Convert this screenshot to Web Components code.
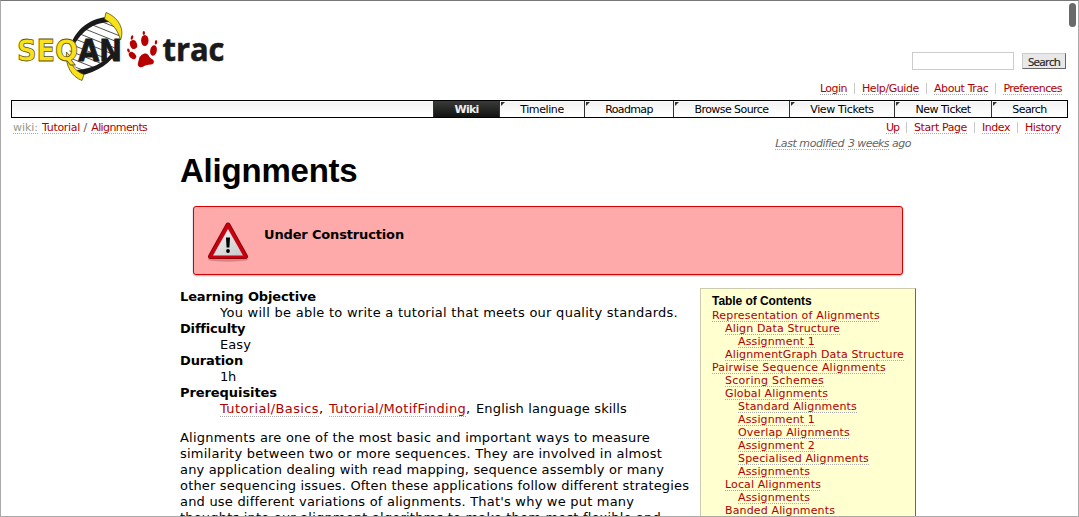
<!DOCTYPE html>
<html lang="en">
<head>
<meta charset="utf-8">
<title>Alignments – SeqAn trac</title>
<style>
html,body{margin:0;height:100%;overflow:hidden;background:#fff}
</style>
</head>
<body>
<trac-page></trac-page>

<template id="t-page">
<style>
:host{display:block;box-sizing:border-box;height:517px;overflow:hidden;border:1px solid #a9a9a9;border-top-color:#777;background:#fff;color:#000;font:13px/16px "DejaVu Sans",Verdana,sans-serif;position:relative}
header{display:flex;justify-content:space-between;height:78px;padding:0 12px 0 11px}
trac-search{margin-top:51px}
link-row{height:20px;--u:5px}
.ctx{display:flex;justify-content:space-between;height:18px;padding-left:12px;font-size:11px;color:#555;--u:5px}
.ctx link-row{padding-right:17px}
.crumbs{line-height:20px;white-space:pre;display:flex}
.crumbs span{margin:0 4px 0 3.5px}
.mod{display:flex;justify-content:flex-end;height:14px;line-height:14px;padding:1px 167px 0 0;font-size:11px;font-style:italic;color:#666;--u:5px}
main{width:736px;margin-left:179px}
h1{margin:0;height:55px;padding-top:2px;box-sizing:border-box;font:bold 33px/36px "Liberation Sans",Arial,sans-serif}
.cols{display:flex;justify-content:space-between;margin-top:14px}
.text{width:515px}
dl{margin:0}dt{font-weight:bold;height:16px}dd{margin:0 0 0 40px;height:16px;display:flex;white-space:pre;--u:7.15px}
p{margin:13px 0 0}
p fit-text{display:block}
.sb{position:absolute;right:2px;top:2px;width:7px;height:24px;border-radius:4px;background:#6a6a6a}
</style>
<header>
  <trac-logo></trac-logo>
  <trac-search></trac-search>
</header>
<link-row>
  <trac-link w="27">Login</trac-link><trac-link w="57">Help/Guide</trac-link><trac-link w="54.5">About Trac</trac-link><trac-link w="58.5">Preferences</trac-link>
</link-row>
<nav-bar>
  <nav-tab active style="--w:66px" w="24">Wiki</nav-tab><nav-tab style="--w:85px" w="43.5">Timeline</nav-tab><nav-tab style="--w:89px" w="47.5">Roadmap</nav-tab><nav-tab style="--w:116px" w="74">Browse Source</nav-tab><nav-tab style="--w:105px" w="63.5">View Tickets</nav-tab><nav-tab style="--w:97px" w="55">New Ticket</nav-tab><nav-tab style="--w:76px" w="34.5">Search</nav-tab>
</nav-bar>
<div class="ctx">
  <div class="crumbs"><trac-link w="25" style="--c:#998;margin-right:4px">wiki:</trac-link><trac-link w="38">Tutorial</trac-link><span>/</span><trac-link w="56">Alignments</trac-link></div>
  <link-row>
    <trac-link w="13">Up</trac-link><trac-link w="53">Start Page</trac-link><trac-link w="28">Index</trac-link><trac-link w="36">History</trac-link>
  </link-row>
</div>
<div class="mod"><trac-link w="69" style="--c:#666;margin-right:4px">Last modified</trac-link><trac-link w="41" style="--c:#666;margin-right:3px">3 weeks</trac-link><fit-text w="19">ago</fit-text></div>
<main>
  <h1><fit-text w="177.5">Alignments</fit-text></h1>
  <notice-box><fit-text w="140">Under Construction</fit-text></notice-box>
  <div class="cols">
    <div class="text">
      <dl>
        <dt><fit-text w="136">Learning Objective</fit-text></dt><dd><fit-text w="458">You will be able to write a tutorial that meets our quality standards.</fit-text></dd>
        <dt><fit-text w="64">Difficulty</fit-text></dt><dd><fit-text w="31">Easy</fit-text></dd>
        <dt><fit-text w="63">Duration</fit-text></dt><dd><fit-text w="16">1h</fit-text></dd>
        <dt><fit-text w="97">Prerequisites</fit-text></dt><dd><trac-link w="99">Tutorial/Basics</trac-link><fit-text w="10">, </fit-text><trac-link w="137">Tutorial/MotifFinding</trac-link><fit-text w="10">, </fit-text><fit-text w="151">English language skills</fit-text></dd>
      </dl>
      <p>
        <fit-text w="470">Alignments are one of the most basic and important ways to measure</fit-text>
        <fit-text w="482">similarity between two or more sequences. They are involved in almost</fit-text>
        <fit-text w="484">any application dealing with read mapping, sequence assembly or many</fit-text>
        <fit-text w="509">other sequencing issues. Often these applications follow different strategies</fit-text>
        <fit-text w="454">and use different variations of alignments. That's why we put many</fit-text>
        <fit-text w="481">thoughts into our alignment algorithms to make them most flexible and</fit-text>
      </p>
    </div>
    <toc-box>
      <trac-link w="168">Representation of Alignments</trac-link>
      <trac-link w="115" style="margin-left:13px">Align Data Structure</trac-link>
      <trac-link w="77" style="margin-left:26px">Assignment 1</trac-link>
      <trac-link w="179" style="margin-left:13px">AlignmentGraph Data Structure</trac-link>
      <trac-link w="174">Pairwise Sequence Alignments</trac-link>
      <trac-link w="99" style="margin-left:13px">Scoring Schemes</trac-link>
      <trac-link w="103" style="margin-left:13px">Global Alignments</trac-link>
      <trac-link w="119" style="margin-left:26px">Standard Alignments</trac-link>
      <trac-link w="77" style="margin-left:26px">Assignment 1</trac-link>
      <trac-link w="112" style="margin-left:26px">Overlap Alignments</trac-link>
      <trac-link w="77" style="margin-left:26px">Assignment 2</trac-link>
      <trac-link w="131" style="margin-left:26px">Specialised Alignments</trac-link>
      <trac-link w="72" style="margin-left:26px">Assignments</trac-link>
      <trac-link w="96" style="margin-left:13px">Local Alignments</trac-link>
      <trac-link w="72" style="margin-left:26px">Assignments</trac-link>
      <trac-link w="110" style="margin-left:13px">Banded Alignments</trac-link>
    </toc-box>
  </div>
</main>
<div class="sb"></div>
</template>

<template id="t-logo">
<style>:host{display:block}svg{display:block}</style>
<svg width="220" height="78" viewBox="12 1 220 78" overflow="visible">
  <defs><clipPath id="lens"><path d="M68 60C69 37 87 21 108 18L121 32C121 52 104 70 81 73Z"/></clipPath></defs>
  <path d="M68 60C69 37 87 21 108 18L121 32C121 52 104 70 81 73Z" fill="#fff"/>
  <g clip-path="url(#lens)" stroke="#222" stroke-width=".8" fill="none">
    <path d="M60 33L130 61M60 26L130 54M60 19L130 47M60 12L130 40M60 5L130 33M60 -2L130 26M60 40L130 68M60 47L130 75M60 54L130 82M60 61L130 89"/>
  </g>
  <path d="M71 44C76 30 89 19 106 17L110 22C94 22 82 31 74 45Z" fill="#1a1a1a"/>
  <path d="M117 51C112 62 98 72 79 76L76 70C92 69 103 63 110 55Z" fill="#1a1a1a"/>
  <path d="M106 12.500L104.500 19C112 23 118 30 120.500 40C125 29 118 17 106 12.500Z" fill="#f9e21a" stroke="#554c10" stroke-width=".8"/>
  <path d="M66.500 52C65 66 72 77 82 80.500L84 74.500C77 72 70 66 70 56Z" fill="#f9e21a" stroke="#554c10" stroke-width=".8"/>
  <text x="17" y="61" textLength="105" lengthAdjust="spacingAndGlyphs" font-family="DejaVu Sans,sans-serif" font-weight="bold" font-size="29.500" fill="#1a1a1a" stroke="#1a1a1a" stroke-width=".8"><tspan fill="#f9e21a" stroke="#5c5410">SEQ</tspan>AN</text>
  <g fill="#b70000">
    <ellipse cx="133.500" cy="44.500" rx="3.500" ry="4.600" transform="rotate(-20 133.500 44.500)"/>
    <ellipse cx="144.800" cy="40.500" rx="3.700" ry="5.600"/>
    <ellipse cx="153.500" cy="50.500" rx="3.300" ry="5.300" transform="rotate(12 153.500 50.500)"/>
    <ellipse cx="132.500" cy="55.500" rx="3" ry="4.200" transform="rotate(-45 132.500 55.500)"/>
    <ellipse cx="132" cy="37.500" rx="1.200" ry="2.300" transform="rotate(15 132 37.500)"/>
    <ellipse cx="143.800" cy="33" rx="1.200" ry="2"/>
    <ellipse cx="156" cy="42.300" rx="1.200" ry="2.200" transform="rotate(10 156 42.300)"/>
    <ellipse cx="128.500" cy="50.500" rx="1.200" ry="2" transform="rotate(-20 128.500 50.500)"/>
    <path d="M139 59C140 55.500 144 52.500 147 54C149.500 55.500 149 57.500 152 59C155 60.500 154.500 64 151 64.500C147 64.500 145 65.500 143.500 66.500C140 68.500 137 66 138 63Z"/>
  </g>
  <text x="162.500" y="61" textLength="62" lengthAdjust="spacingAndGlyphs" font-family="Open Sans,sans-serif" font-weight="bold" font-size="33" fill="#1a1a1a" stroke="#1a1a1a" stroke-width=".6">trac</text>
</svg>
</template>

<template id="t-search">
<style>
:host{display:flex;gap:8px}
input{box-sizing:border-box;width:102px;height:18px;border:1px solid #ccc;padding:0;margin:0;outline:0;background:#fff}
button{box-sizing:border-box;width:44px;height:16px;margin:1px 0 0;padding:0;border:1px solid #ccc;border-right-color:#666;border-bottom-color:#666;background:#e8e8e8;color:#222;font:11.5px/13px "Open Sans",sans-serif;white-space:nowrap;-webkit-text-stroke:.2px #222}
fit-text{line-height:13px;vertical-align:top}
</style>
<input type="text" aria-label="Search"><button><fit-text w="32">Search</fit-text></button>
</template>

<template id="t-linkrow">
<style>
:host{display:flex;justify-content:flex-end;padding-right:16px;font-size:11px;line-height:20px}
::slotted(*){position:relative}
::slotted(:not(:last-child)){margin-right:15px}
::slotted(:not(:last-child))::after{content:"";position:absolute;right:-8px;top:4px;height:11px;width:1px;background:#c8c8c8}
</style><slot></slot>
</template>

<template id="t-nav">
<style>
:host{display:flex;justify-content:flex-end;box-sizing:border-box;height:18px;margin:1px 10px 0 10px;border:1px solid #000;background:linear-gradient(#fff,#f2f2f2 12%,#fff 80%);font-size:11px;line-height:17px}
</style><slot></slot>
</template>

<template id="t-tab">
<style>
:host{display:block;box-sizing:border-box;width:var(--w);border-left:1px solid #333;text-align:center;position:relative}
:host::before{content:"";position:absolute;left:1px;top:1px;border:2px solid transparent;border-top-color:#333;border-left-color:#333}
:host([active]){background:linear-gradient(#3a3a3a,#252725 50%,#111);color:#eee;font-weight:bold}
:host([active])::before{display:none}
</style><span></span>
</template>

<template id="t-notice">
<style>
:host{display:flex;box-sizing:border-box;height:69px;margin:0 13px;border:1px solid #d40000;border-radius:3px;background:#ffaaaa;box-shadow:0 1px 2px rgba(0,0,0,.3);font-weight:bold;line-height:16px}
svg{display:block;margin:13px 12px 0 11px}
div{padding-top:20px}
</style>
<svg width="47" height="46" viewBox="0 0 47 46">
  <defs><linearGradient id="g" x1="0" y1="0" x2="1" y2="1"><stop stop-color="#f4f4f4"/><stop offset="1" stop-color="#c8c8c8"/></linearGradient></defs>
  <ellipse cx="23" cy="39.500" rx="20" ry="2.200" fill="#733" opacity=".3"/>
  <path d="M23 5L40.500 36.500H5.500Z" fill="#c00010" stroke="#900008" stroke-width="5" stroke-linejoin="round"/>
  <path d="M23 5L40.500 36.500H5.500Z" fill="#c90010" stroke="#c90010" stroke-width="3" stroke-linejoin="round"/>
  <path d="M23 9L38 35.500H8Z" fill="url(#g)"/>
  <path d="M21 17.500H25L24.400 27.500H21.600Z"/><circle cx="23" cy="31" r="1.900"/>
</svg>
<div><slot></slot></div>
</template>

<template id="t-toc">
<style>
:host{display:flex;flex-direction:column;align-items:flex-start;box-sizing:border-box;width:216px;height:300px;margin-top:-1px;padding:6px 0 0 11px;border:1px solid #d7d7d7;border-right-color:#666;border-top-color:#cccbb0;border-left-color:#ccccb0;background:#ffffd0;font-size:11px;line-height:13px}
h4{margin:0;font:bold 12px/13px "Liberation Sans",Arial,sans-serif;height:14px}
</style><h4><fit-text w="99.500">Table of Contents</fit-text></h4><slot></slot>
</template>

<script>
const tpl = id => document.getElementById(id).content.cloneNode(true);
const define = (name, id) => customElements.define(name, class extends HTMLElement {
  constructor() { super(); this.attachShadow({mode: 'open'}).append(tpl(id)); }
});
define('trac-page', 't-page');
define('trac-logo', 't-logo');
define('trac-search', 't-search');
define('link-row', 't-linkrow');
define('nav-bar', 't-nav');
define('notice-box', 't-notice');
define('toc-box', 't-toc');

const pen = document.createElement('canvas').getContext('2d');
/* Spacing per letter that brings a run of text to the given width. */
function spacing(el, text, w) {
  const cs = getComputedStyle(el);
  pen.font = `${cs.fontStyle} ${cs.fontWeight} ${cs.fontSize} ${cs.fontFamily}`;
  return (w - pen.measureText(text).width) / text.length + 'px';
}

customElements.define('nav-tab', class extends HTMLElement {
  connectedCallback() {
    if (this.shadowRoot) return;
    this.attachShadow({mode: 'open'}).append(tpl('t-tab'));
    const s = this.shadowRoot.querySelector('span');
    s.append(document.createElement('slot'));
    s.style.letterSpacing = spacing(this, this.textContent, +this.getAttribute('w'));
  }
});

class FitText extends HTMLElement {
  css() { return ':host{display:inline-block;white-space:pre}'; }
  connectedCallback() {
    if (this.shadowRoot) return;
    const root = this.attachShadow({mode: 'open'});
    root.innerHTML = `<style>${this.css()}</style><slot></slot>`;
    this.style.letterSpacing = spacing(this, this.textContent, +this.getAttribute('w'));
  }
}
customElements.define('fit-text', FitText);
customElements.define('trac-link', class extends FitText {
  css() {
    return `:host{display:inline-block;white-space:pre;color:var(--c,#b00000);
      background:repeating-linear-gradient(90deg,#aaa 0 1px,transparent 1px 2px) 0 calc(.5lh + var(--u,5.5px)) / 100% 1px no-repeat}`;
  }
});
</script>
</body>
</html>
